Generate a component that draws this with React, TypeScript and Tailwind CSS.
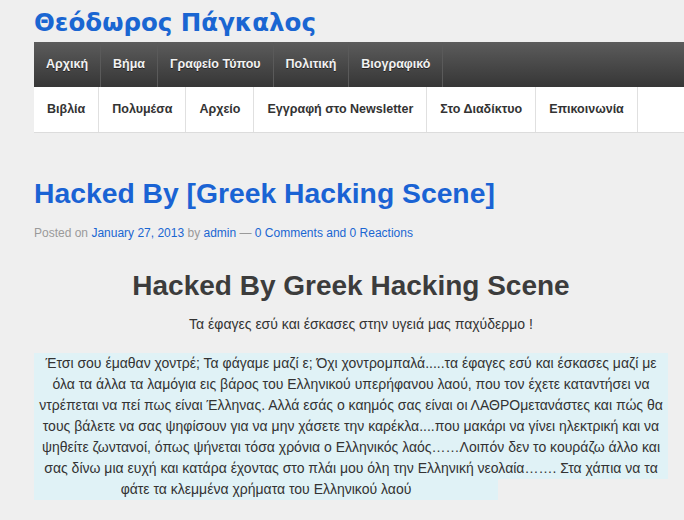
const topMenu = ["Αρχική", "Βήμα", "Γραφείο Τύπου", "Πολιτική", "Βιογραφικό"];
const subMenu = [
  "Βιβλία",
  "Πολυμέσα",
  "Αρχείο",
  "Εγγραφή στο Newsletter",
  "Στο Διαδίκτυο",
  "Επικοινωνία",
];

const lines = [
  "Έτσι σου έμαθαν χοντρέ; Τα φάγαμε μαζί ε; Όχι χοντρομπαλά.....τα έφαγες εσύ και έσκασες μαζί με",
  "όλα τα άλλα τα λαμόγια εις βάρος του Ελληνικού υπερήφανου λαού, που τον έχετε καταντήσει να",
  "ντρέπεται να πεί πως είναι Έλληνας. Αλλά εσάς ο καημός σας είναι οι ΛΑΘΡΟμετανάστες και πώς θα",
  "τους βάλετε να σας ψηφίσουν για να μην χάσετε την καρέκλα....που μακάρι να γίνει ηλεκτρική και να",
  "ψηθείτε ζωντανοί, όπως ψήνεται τόσα χρόνια ο Ελληνικός λαός……Λοιπόν δεν το κουράζω άλλο και",
  "σας δίνω μια ευχή και κατάρα έχοντας στο πλάι μου όλη την Ελληνική νεολαία……. Στα χάπια να τα",
];

export default function App() {
  return (
    <div className="min-h-screen w-full overflow-hidden bg-[#efefef] pl-[34px] font-['Liberation_Sans',Arial,sans-serif]">
      {/* Site title */}
      <h1 className="h-[42px] pt-[8px] font-['DejaVu_Sans',sans-serif] text-[24.5px] font-bold leading-[29px] text-[#1a66d2]">
        Θεόδωρος Πάγκαλος
      </h1>

      {/* Primary nav */}
      <nav className="flex h-[45px] bg-gradient-to-b from-[#5c5c5c] to-[#363636]">
        {topMenu.map((item) => (
          <a
            key={item}
            href="#"
            className="flex items-center border-r border-[#5a5a5a] px-[12px] text-[12.5px] font-bold text-[#f2f2f2] [text-shadow:0_1px_0_#222]"
          >
            {item}
          </a>
        ))}
      </nav>

      {/* Secondary nav */}
      <nav className="flex h-[46px] border-b border-[#dcdcdc] bg-white">
        {subMenu.map((item) => (
          <a
            key={item}
            href="#"
            className="flex items-center border-r border-[#e0e0e0] px-[13px] text-[12.5px] font-bold text-[#333]"
          >
            {item}
          </a>
        ))}
      </nav>

      {/* Post */}
      <article className="w-[634px] pt-[43px]">
        <h2 className="text-[28.3px] font-bold leading-[34px] text-[#1a63d4]">
          Hacked By [Greek Hacking Scene]
        </h2>
        <p className="mt-[15px] text-[12px] leading-[16px] text-[#9a9a9a]">
          Posted on <a href="#" className="text-[#1a66d2]">January 27, 2013</a> by{" "}
          <a href="#" className="text-[#1a66d2]">admin</a> —{" "}
          <a href="#" className="text-[#1a66d2]">0 Comments and 0 Reactions</a>
        </p>

        <h3 className="mt-[28px] text-center text-[28px] font-bold leading-[34px] text-[#3c3c3c]">
          Hacked By Greek Hacking Scene
        </h3>
        <p className="mt-[11px] pl-[20px] text-center text-[14px] leading-[20px] text-[#333]">
          Τα έφαγες εσύ και έσκασες στην υγειά μας παχύδερμο !
        </p>

        <div className="mt-[19px] text-[14px] leading-[21px] text-[#333]">
          {lines.map((l) => (
            <div key={l} className="whitespace-nowrap bg-[#e0f2f6] text-center">
              {l}
            </div>
          ))}
          <div className="w-[464px] whitespace-nowrap bg-[#e0f2f6] text-center">
            φάτε τα κλεμμένα χρήματα του Ελληνικού λαού
          </div>
        </div>
      </article>
    </div>
  );
}
